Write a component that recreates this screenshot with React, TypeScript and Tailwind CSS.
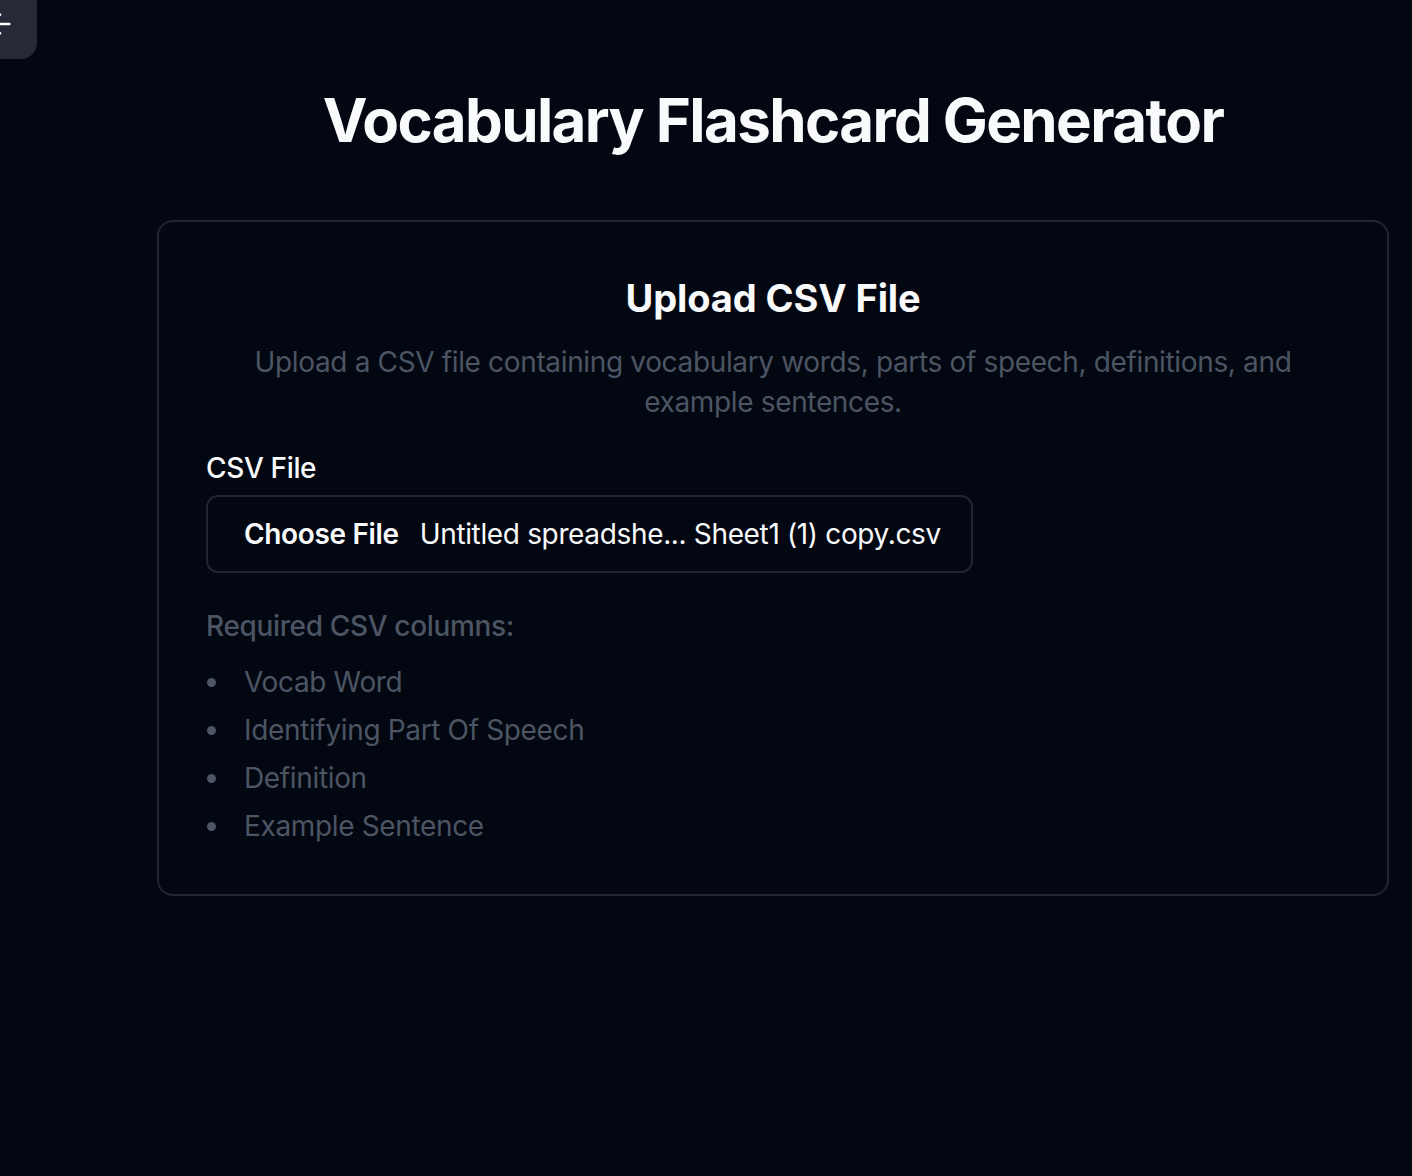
import { ArrowLeft } from "lucide-react";

const columns = ["Vocab Word", "Identifying Part Of Speech", "Definition", "Example Sentence"];

export default function App() {
  return (
    <main
      className="relative min-h-[1176px] w-full overflow-hidden bg-[#030712] text-[#f9fafb]"
      style={{ fontFamily: "Inter, 'Noto Sans', sans-serif" }}
    >
      {/* back button, partly off-screen */}
      <button className="absolute left-0 top-0 h-[59px] w-[37px] overflow-hidden rounded-br-[16px] bg-[#252a36]">
        <ArrowLeft size={32} strokeWidth={2} className="absolute left-[-16px] top-[8px] text-white" />
      </button>

      <div className="ml-[157px] w-[1232px] pt-[84px]">
        <h1 className="text-center text-[60px] font-bold leading-[72px] tracking-[-1.6px]">
          Vocabulary Flashcard Generator
        </h1>

        <section className="mt-[64px] rounded-[16px] border-2 border-[#1f2533] px-[47px] pb-[48px] pt-[56px] tracking-[-0.35px]">
          <h2 className="text-center text-[38px] font-bold leading-[40px] tracking-[-0.1px]">Upload CSV File</h2>
          <p className="mx-auto mt-[24px] max-w-[1060px] text-center text-[28px] leading-[40px] text-[#4b5563]">
            Upload a CSV file containing vocabulary words, parts of speech, definitions, and example sentences.
          </p>

          <label className="mt-[26px] block text-[28px] font-medium leading-[40px]">CSV File</label>
          <div className="mt-[7px] flex h-[78px] w-[767px] items-center rounded-[12px] border-2 border-[#1f2533] pl-[36px] text-[28px]">
            <span className="font-semibold">Choose File</span>
            <span className="ml-[21px]">Untitled spreadshe... Sheet1 (1) copy.csv</span>
          </div>

          <p className="mt-[33px] text-[28px] font-medium leading-[40px] text-[#4b5563]">Required CSV columns:</p>
          <ul className="mt-[16px] flex flex-col gap-[8px]">
            {columns.map((c) => (
              <li key={c} className="flex items-center text-[28px] leading-[40px] text-[#4b5563]">
                <span className="ml-[1px] h-[9px] w-[9px] rounded-full bg-[#4b5563]" />
                <span className="ml-[28px]">{c}</span>
              </li>
            ))}
          </ul>
        </section>
      </div>
    </main>
  );
}
